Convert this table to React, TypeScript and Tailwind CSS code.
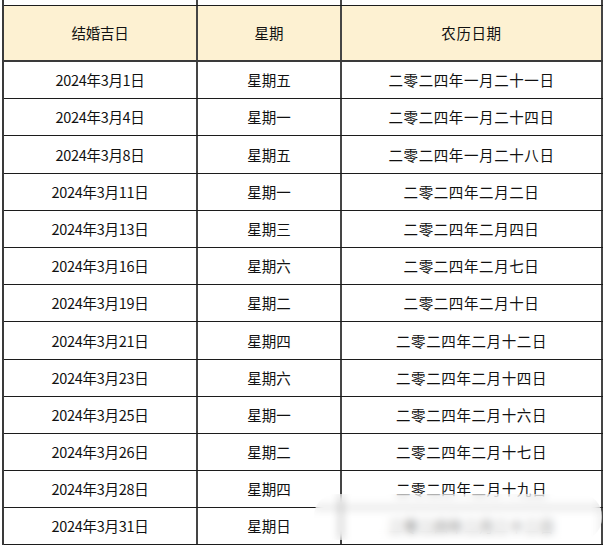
const rows: [string, string, string][] = [
  ['2024年3月1日', '星期五', '二零二四年一月二十一日'],
  ['2024年3月4日', '星期一', '二零二四年一月二十四日'],
  ['2024年3月8日', '星期五', '二零二四年一月二十八日'],
  ['2024年3月11日', '星期一', '二零二四年二月二日'],
  ['2024年3月13日', '星期三', '二零二四年二月四日'],
  ['2024年3月16日', '星期六', '二零二四年二月七日'],
  ['2024年3月19日', '星期二', '二零二四年二月十日'],
  ['2024年3月21日', '星期四', '二零二四年二月十二日'],
  ['2024年3月23日', '星期六', '二零二四年二月十四日'],
  ['2024年3月25日', '星期一', '二零二四年二月十六日'],
  ['2024年3月26日', '星期二', '二零二四年二月十七日'],
  ['2024年3月28日', '星期四', '二零二四年二月十九日'],
  ['2024年3月31日', '星期日', '二零二四年二月二十二日'],
]

const font = { fontFamily: '"Noto Sans CJK SC", "DejaVu Sans", sans-serif' }

// one spreadsheet row: 3 cells with vertical rules between them
function Row({ cells, className }: { cells: string[]; className: string }) {
  return (
    <div className={`flex border-b border-[#1c1c1c] ${className}`}>
      <div className="w-[194px] flex items-center justify-center border-r-2 border-[#454545] tracking-[-0.3px]">{cells[0]}</div>
      <div className="w-[144px] flex items-center justify-center border-r-2 border-[#454545]">{cells[1]}</div>
      <div className="w-[261px] flex items-center justify-center border-r-2 border-[#454545] tracking-[0.6px]">{cells[2]}</div>
    </div>
  )
}

export default function App() {
  return (
    <div className="relative w-[606px] h-[548px] overflow-hidden bg-white text-[14.5px] text-[#111]" style={font}>
      <div className="flex">
        {/* sheet gutter on the left */}
        <div className="w-[4px] shrink-0 border-r-2 border-[#3a3a3a]" />
        <div className="flex flex-col">
          <Row cells={['', '', '']} className="h-[6px]" />
          <Row cells={['结婚吉日', '星期', '农历日期']} className="h-[56px] bg-[#fdf1d2] border-b-2 border-b-[#3a3a3a]" />
          {rows.map((r) => (
            <Row key={r[0]} cells={r} className="h-[37.2px]" />
          ))}
        </div>
      </div>

      {/* watermark smear over the bottom right */}
      <div className="absolute left-[314px] top-[494px] w-[288px] h-[46px] rounded-[22px] bg-white/40 backdrop-blur-[4px]" />
    </div>
  )
}
